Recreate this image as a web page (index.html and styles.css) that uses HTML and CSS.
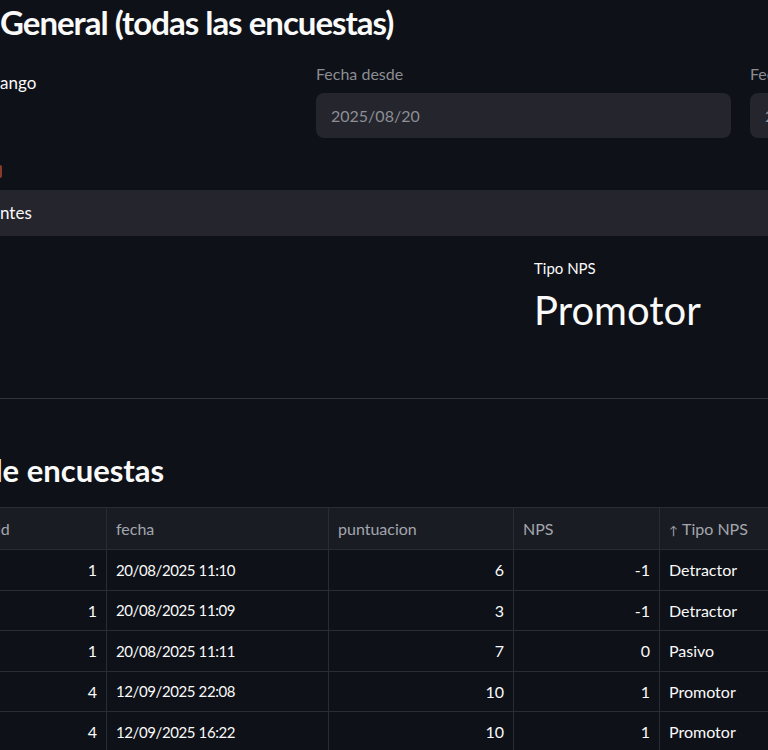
FILE: index.html
```html
<!DOCTYPE html>
<html lang="es">
<head>
    <meta charset="UTF-8">
    <meta name="viewport" content="width=device-width, initial-scale=1.0">
    <title>NPS General</title>
    <link rel="stylesheet" href="styles.css">
</head>
<body>
    <main class="page">
        <h2 class="title"><span class="hang">Resumen </span>General (todas las encuestas)</h2>

        <div class="filters">
            <div class="check"><span class="hang">Filtrar por r</span>ango</div>
            <div class="field">
                <div class="field-label">Fecha desde</div>
                <div class="field-input">2025/08/20</div>
            </div>
            <div class="field">
                <div class="field-label">Fecha hasta</div>
                <div class="field-input">2025/09/30</div>
            </div>
        </div>

        <div class="alert-mark"></div>

        <div class="expander"><span class="hang">Ver compone</span>ntes</div>

        <div class="metrics">
            <div class="metric"></div>
            <div class="metric">
                <div class="metric-label">Tipo NPS</div>
                <div class="metric-value">Promotor</div>
            </div>
        </div>

        <hr class="divider">

        <h3 class="subtitle"><span class="hang">Detalle </span>de encuestas</h3>

        <table class="grid">
            <colgroup>
                <col class="col-id">
                <col class="col-fecha">
                <col class="col-punt">
                <col class="col-nps">
                <col class="col-tipo">
            </colgroup>
            <thead>
                <tr>
                    <th>id</th>
                    <th>fecha</th>
                    <th>puntuacion</th>
                    <th>NPS</th>
                    <th><span class="sort">&#8593;</span>Tipo NPS</th>
                </tr>
            </thead>
            <tbody>
                <tr><td class="num">1</td><td class="date">20/08/2025 11:10</td><td class="num">6</td><td class="num">-1</td><td>Detractor</td></tr>
                <tr><td class="num">1</td><td class="date">20/08/2025 11:09</td><td class="num">3</td><td class="num">-1</td><td>Detractor</td></tr>
                <tr><td class="num">1</td><td class="date">20/08/2025 11:11</td><td class="num">7</td><td class="num">0</td><td>Pasivo</td></tr>
                <tr><td class="num">4</td><td class="date">12/09/2025 22:08</td><td class="num">10</td><td class="num">1</td><td>Promotor</td></tr>
                <tr><td class="num">4</td><td class="date">12/09/2025 16:22</td><td class="num">10</td><td class="num">1</td><td>Promotor</td></tr>
            </tbody>
        </table>
    </main>
</body>
</html>
```

FILE: styles.css
```css
body {
    margin: 0;
    background-color: #0e1117;
    color: #fafafa;
    font-family: "Source Sans Pro", Lato, "Noto Sans", sans-serif;
    overflow: hidden;
}
.page {
    width: 1200px;
}
/* text cut off by the left edge of the window */
.hang {
    display: inline-flex;
    justify-content: flex-end;
    width: 0;
    white-space: pre;
}
.title {
    margin: 0;
    height: 64px;
    font-size: 33px;
    font-weight: 700;
    letter-spacing: -1px;
    line-height: 44px;
}
.filters {
    display: grid;
    grid-template-columns: 297px 415px 415px;
    column-gap: 19px;
}
.check {
    margin-top: 7px;
    font-size: 17px;
    line-height: 24px;
}
.field-label {
    font-size: 16px;
    line-height: 20px;
    color: #8b8d93;
}
.field-input {
    margin-top: 9px;
    height: 45px;
    padding: 0 15px;
    border-radius: 8px;
    background-color: #24252d;
    color: #8d8f95;
    font-size: 16px;
    line-height: 45px;
}
.alert-mark {
    width: 2px;
    height: 13px;
    margin-top: 27px;
    border-radius: 0 6px 6px 0;
    background-color: #8a3a2b;
}
.expander {
    margin-top: 12px;
    height: 46px;
    background-color: #24252d;
    font-size: 17px;
    line-height: 46px;
}
.metrics {
    display: grid;
    grid-template-columns: 515px 400px;
    column-gap: 19px;
    margin-top: 22px;
}
.metric-label {
    font-size: 15px;
    line-height: 20px;
}
.metric-value {
    margin-top: 8px;
    font-size: 40px;
    line-height: 48px;
}
.divider {
    margin: 64px 0 0;
    border: none;
    border-top: 1px solid #30333b;
}
.subtitle {
    margin: 0 0 0 -15px;
    height: 108px;
    font-size: 31px;
    font-weight: 700;
    line-height: 142px;
}
.grid {
    width: 852px;
    margin-left: -13px;
    border-collapse: collapse;
    table-layout: fixed;
    font-size: 16px;
}
.grid th,
.grid td {
    height: 39.5px;
    padding: 0 9px;
    border: 1px solid #2a2c34;
    text-align: left;
    white-space: nowrap;
    overflow: hidden;
}
.grid th {
    height: 41px;
    background-color: #1a1c23;
    color: #a3a6ae;
    font-weight: 400;
}
.grid td.num {
    text-align: right;
}
.grid td.date {
    font-size: 15px;
    letter-spacing: -0.4px;
}
.col-id { width: 119px; }
.col-fecha { width: 222px; }
.col-punt { width: 185px; }
.col-nps { width: 146px; }
.col-tipo { width: 180px; }
.sort {
    margin-right: 4px;
    font-size: 12px;
}
```
